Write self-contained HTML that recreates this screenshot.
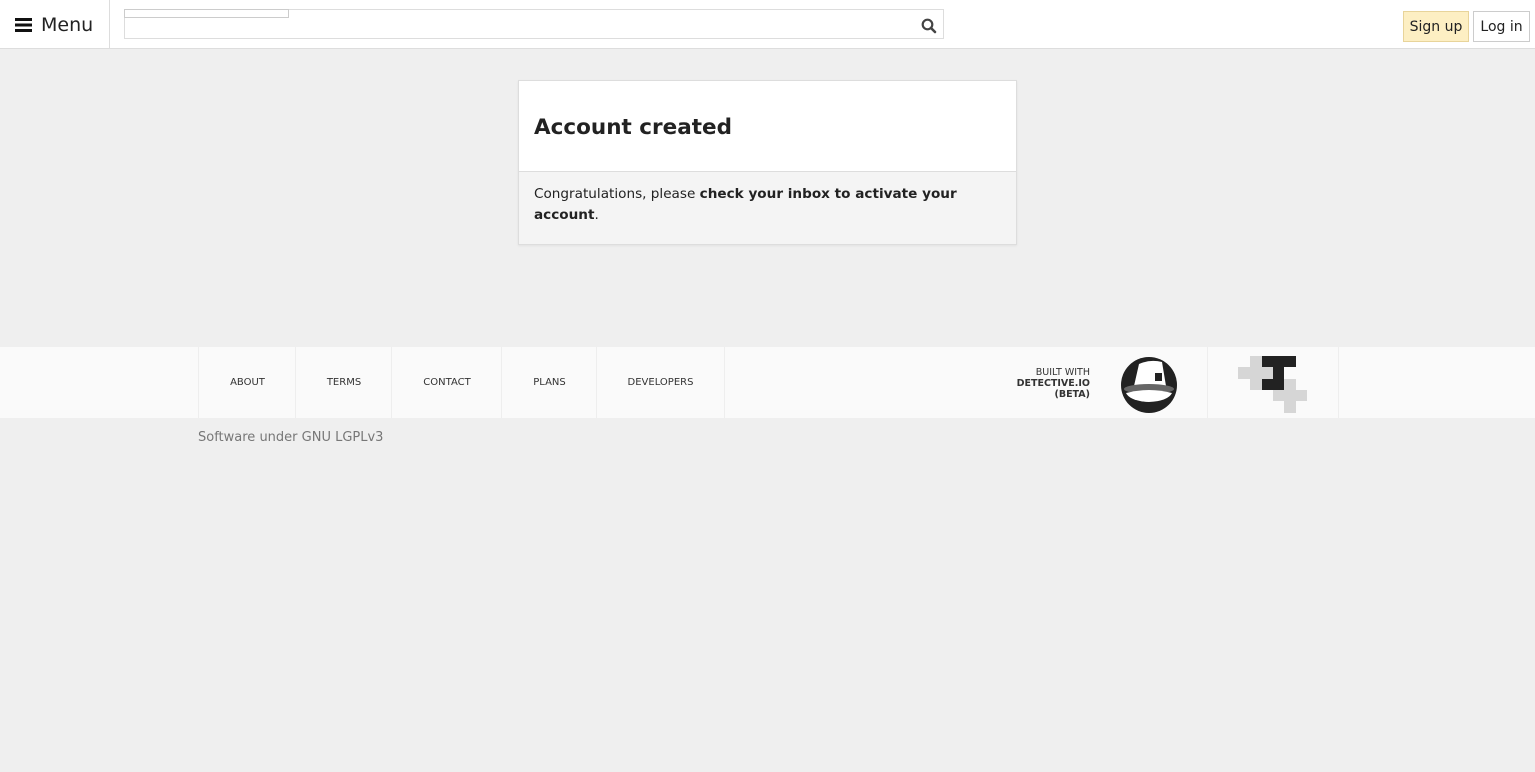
<!DOCTYPE html><html><head><style>
body{margin:0;width:1535px;height:772px;background:#efefef;font-family:"DejaVu Sans","Liberation Sans",sans-serif;color:#222;position:relative;overflow:hidden}
.top{position:absolute;left:0;top:0;width:1535px;height:48px;background:#fff;border-bottom:1px solid #ddd}
.menu{position:absolute;left:0;top:0;width:109px;height:48px;border-right:1px solid #ddd;font-size:19px;line-height:50px}
.search{position:absolute;left:124px;top:9px;width:820px;height:30px;border:1px solid #ddd;box-sizing:border-box}
.btn{position:absolute;top:11px;height:31px;box-sizing:border-box;border:1px solid #ccc;font-size:14px;line-height:31px;text-align:center}
.card{position:absolute;left:518px;top:80px;width:499px;height:165px;border:1px solid #ddd;box-sizing:border-box;background:#f4f4f4;box-shadow:0 1px 2px rgba(0,0,0,.06)}
.foot{position:absolute;left:0;top:347px;width:1535px;height:71px;background:#fafafa}
.fl{position:absolute;top:0;height:71px;border-left:1px solid #eee;font-size:10px;line-height:71px;color:#333;text-align:center}
</style></head><body>
<div class="top">
<div class="menu"><svg style="position:absolute;left:15px;top:18px" width="17" height="14"><rect y="0" width="17" height="3" fill="#111"/><rect y="5.5" width="17" height="3" fill="#111"/><rect y="11" width="17" height="3" fill="#111"/></svg><span style="position:absolute;left:41px;top:0">Menu</span></div>
<div class="search"></div>
<div style="position:absolute;left:124px;top:9px;width:165px;height:9px;border:1px solid #ccc;box-sizing:border-box;background:#fff"></div>
<svg style="position:absolute;left:921px;top:18px" width="16" height="16"><circle cx="6.5" cy="6.5" r="4.8" stroke="#444" stroke-width="2.2" fill="none"/><line x1="10" y1="10" x2="14" y2="14" stroke="#444" stroke-width="2.6" stroke-linecap="round"/></svg>
<div class="btn" style="left:1403px;width:66px;background:#fdefc3;border-color:#e8d49a">Sign up</div>
<div class="btn" style="left:1473px;width:57px;background:#fff">Log in</div>
</div>
<div class="card">
<div style="background:#fff;height:91px;border-bottom:1px solid #ddd;box-sizing:border-box;padding:34px 0 0 15px;font-size:21.5px;font-weight:bold">Account created</div>
<div style="padding:12px 15px;font-size:13.6px;line-height:21px;width:432px">Congratulations, please <b>check your inbox to activate your account</b>.</div>
</div>
<div class="foot">
<div class="fl" style="left:198px;width:97px">ABOUT</div>
<div class="fl" style="left:295px;width:96px">TERMS</div>
<div class="fl" style="left:391px;width:110px">CONTACT</div>
<div class="fl" style="left:501px;width:95px">PLANS</div>
<div class="fl" style="left:596px;width:127px;border-right:1px solid #eee">DEVELOPERS</div>
<div style="position:absolute;left:970px;top:20px;width:120px;text-align:right;font-size:9.5px;line-height:11px;color:#333">BUILT WITH<br><b>DETECTIVE.IO<br>(BETA)</b></div>
<svg style="position:absolute;left:1120px;top:9px" width="58" height="58" viewBox="0 0 58 58"><circle cx="29" cy="29" r="28" fill="#222"/><path d="M14 30 L19 8 Q30 3 42 6 L46 30 Z" fill="#fff"/><rect x="35" y="17" width="7" height="8" fill="#222"/><ellipse cx="29" cy="33" rx="25" ry="5" fill="#666"/><path d="M6 37 Q29 31 52 37 Q48 45 29 46 Q10 45 6 37Z" fill="#fff"/></svg>
<div class="fl" style="left:1207px;width:130px;border-right:1px solid #eee"></div>
<svg style="position:absolute;left:1238px;top:9px" width="70" height="57"><g fill="#d6d6d6"><rect x="0" y="11" width="35" height="12"/><rect x="12" y="0" width="12" height="34"/><rect x="46" y="23" width="12" height="34"/><rect x="35" y="34" width="34" height="11"/></g><g fill="#222"><rect x="24" y="0" width="34" height="11"/><rect x="35" y="11" width="11" height="12"/><rect x="24" y="23" width="22" height="11"/></g></svg>
</div>
<div style="position:absolute;left:198px;top:430px;font-size:13px;color:#777">Software under GNU LGPLv3</div>
</body></html>
